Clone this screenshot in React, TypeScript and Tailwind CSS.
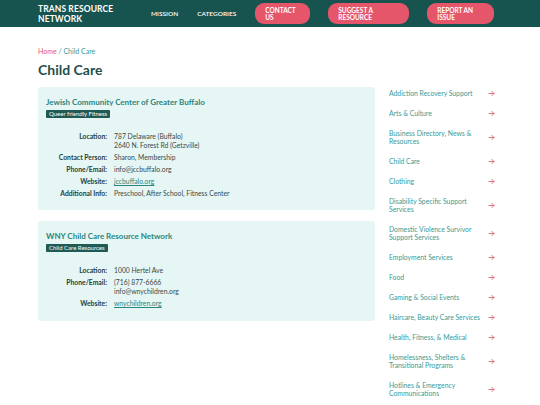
import React from "react";

const cats: string[] = [
  "Addiction Recovery Support",
  "Arts & Culture",
  "Business Directory, News & Resources",
  "Child Care",
  "Clothing",
  "Disability Specific Support Services",
  "Domestic Violence Survivor Support Services",
  "Employment Services",
  "Food",
  "Gaming & Social Events",
  "Haircare, Beauty Care Services",
  "Health, Fitness, & Medical",
  "Homelessness, Shelters & Transitional Programs",
  "Hotlines & Emergency Communications",
];

function Row({ label, children }: { label: string; children: React.ReactNode }) {
  return (
    <div className="flex leading-[9px]">
      <div className="w-[61px] shrink-0 text-right font-bold text-[#1f3f3d]">{label}</div>
      <div className="pl-[7px] text-[#3a4a48]">{children}</div>
    </div>
  );
}

function Arrow() {
  return (
    <svg width="7" height="7" viewBox="0 0 10 10" fill="none" stroke="#e0566b" strokeWidth="1.2" strokeLinecap="round" strokeLinejoin="round">
      <path d="M1.5 5h7M5.5 2l3 3-3 3" />
    </svg>
  );
}

export default function App() {
  return (
    <div className="min-h-[405px] bg-white" style={{ fontFamily: "Lato, 'Noto Sans', sans-serif" }}>
      <header className="h-[27px] bg-[#17534f] flex items-center pl-[38px]">
        <div className="text-white font-bold text-[8.5px] leading-[10px] tracking-[0.1px] w-[113px]">
          TRANS RESOURCE<br />NETWORK
        </div>
        <div className="text-white text-[6.5px] font-semibold">MISSION</div>
        <div className="text-white text-[6.5px] font-semibold ml-[19px]">CATEGORIES</div>
        <div className="ml-[19px] h-[21px] w-[55px] rounded-[9px] bg-[#e5566a] text-white text-[6.5px] font-bold leading-[7px] flex items-center pl-[10px]">
          CONTACT<br />US
        </div>
        <div className="ml-[18px] h-[21px] w-[81px] rounded-[9px] bg-[#e5566a] text-white text-[6.5px] font-bold leading-[7px] flex items-center pl-[10px]">
          SUGGEST A<br />RESOURCE
        </div>
        <div className="ml-[18px] h-[21px] w-[67px] rounded-[9px] bg-[#e5566a] text-white text-[6.5px] font-bold leading-[7px] flex items-center pl-[10px]">
          REPORT AN<br />ISSUE
        </div>
      </header>

      <div className="pl-[38px] pt-[20px]">
        <div className="text-[7px] leading-[9px]">
          <span className="text-[#e5566a]">Home</span>
          <span className="text-[#3a9a94]"> / Child Care</span>
        </div>
        <h1 className="text-[14px] font-bold text-[#1f4f4c] mt-[4px] leading-[20px]">Child Care</h1>

        <div className="flex items-start mt-[7px]">
          <div className="w-[337px] flex flex-col gap-[11px]">
            <div className="bg-[#e6f6f4] rounded-[3px] pl-[8px] pt-[10px] pb-[12px] text-[6.8px]">
              <div className="text-[8px] font-bold text-[#2b8580] leading-[11px]">Jewish Community Center of Greater Buffalo</div>
              <div className="inline-block bg-[#1f5a55] text-white text-[6px] leading-[8px] px-[3px] rounded-[1px] mt-[2px]">Queer friendly Fitness</div>
              <div className="mt-[14px] flex flex-col gap-[3px]">
                <Row label="Location:">787 Delaware (Buffalo)<br />2640 N. Forest Rd (Getzville)</Row>
                <Row label="Contact Person:">Sharon, Membership</Row>
                <Row label="Phone/Email:">info@jccbuffalo.org</Row>
                <Row label="Website:"><span className="text-[#2b8580] underline">jccbuffalo.org</span></Row>
                <Row label="Additional Info:">Preschool, After School, Fitness Center</Row>
              </div>
            </div>
            <div className="bg-[#e6f6f4] rounded-[3px] pl-[8px] pt-[10px] pb-[13px] text-[6.8px]">
              <div className="text-[8px] font-bold text-[#2b8580] leading-[11px]">WNY Child Care Resource Network</div>
              <div className="inline-block bg-[#1f5a55] text-white text-[6px] leading-[8px] px-[3px] rounded-[1px] mt-[2px]">Child Care Resources</div>
              <div className="mt-[14px] flex flex-col gap-[3px]">
                <Row label="Location:">1000 Hertel Ave</Row>
                <Row label="Phone/Email:">(716) 877-6666<br />info@wnychildren.org</Row>
                <Row label="Website:"><span className="text-[#2b8580] underline">wnychildren.org</span></Row>
              </div>
            </div>
          </div>

          <div className="ml-[14px] w-[106px] flex flex-col -mt-[4px]">
            {cats.map((c) => (
              <div key={c} className="flex items-center justify-between py-[6px]">
                <div className="text-[6.8px] leading-[8px] text-[#3a9a94] w-[96px]">{c}</div>
                <Arrow />
              </div>
            ))}
          </div>
        </div>
      </div>
    </div>
  );
}
